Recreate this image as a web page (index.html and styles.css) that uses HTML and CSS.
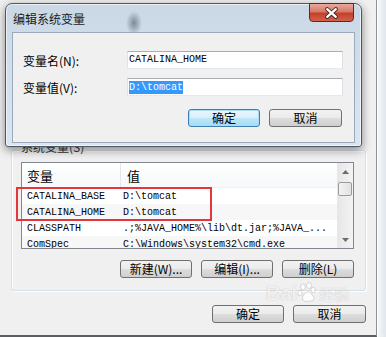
FILE: index.html
```html
<!DOCTYPE html>
<html lang="zh-CN">
<head>
    <meta charset="UTF-8">
    <title>编辑系统变量</title>
    <link rel="stylesheet" href="styles.css">
</head>
<body>
    <div class="screen">
        <div class="back-window">
            <div class="group">
                <div class="group-label">系统变量(S)</div>
                <div class="list">
                    <div class="list-main">
                        <div class="list-head">
                            <span class="head-name">变量</span>
                            <span class="head-value">值</span>
                        </div>
                        <div class="row"><span class="col-name">CATALINA_BASE</span><span class="col-value">D:\tomcat</span></div>
                        <div class="row alt"><span class="col-name">CATALINA_HOME</span><span class="col-value">D:\tomcat</span></div>
                        <div class="row"><span class="col-name">CLASSPATH</span><span class="col-value">.;%JAVA_HOME%\lib\dt.jar;%JAVA_...</span></div>
                        <div class="row alt"><span class="col-name">ComSpec</span><span class="col-value">C:\Windows\system32\cmd.exe</span></div>
                    </div>
                    <div class="scrollbar">
                        <div class="scroll-arrow">
                            <svg width="7" height="4" viewBox="0 0 7 4"><path d="M0 4 L3.5 0 L7 4 Z" fill="#6d6d6d"/></svg>
                        </div>
                        <div class="scroll-thumb"></div>
                        <div class="scroll-track"></div>
                        <div class="scroll-arrow">
                            <svg width="7" height="4" viewBox="0 0 7 4"><path d="M0 0 L3.5 4 L7 0 Z" fill="#6d6d6d"/></svg>
                        </div>
                    </div>
                </div>
                <div class="btn-row group-buttons">
                    <button class="btn">新建(W)...</button>
                    <button class="btn">编辑(I)...</button>
                    <button class="btn">删除(L)</button>
                </div>
            </div>
            <div class="btn-row footer-buttons">
                <button class="btn">确定</button>
                <button class="btn wide">取消</button>
            </div>
        </div>
        <div class="side-strip"></div>

        <!-- 前景对话框 -->
        <div class="dialog">
            <div class="titlebar">
                <span class="title">编辑系统变量</span>
                <button class="close-btn">
                    <svg width="45" height="19" viewBox="0 0 45 19">
                        <path d="M18 5 L27 13 M27 5 L18 13" stroke="#4a2a26" stroke-width="4.4" stroke-linecap="round"/>
                        <path d="M18 5 L27 13 M27 5 L18 13" stroke="#fff" stroke-width="2.4" stroke-linecap="round"/>
                    </svg>
                </button>
            </div>
            <div class="client">
                <div class="field-row">
                    <span class="field-label">变量名(N):</span>
                    <div class="textbox">CATALINA_HOME</div>
                </div>
                <div class="field-row">
                    <span class="field-label">变量值(V):</span>
                    <div class="textbox"><span class="selected">D:\tomcat</span></div>
                </div>
                <div class="btn-row dialog-buttons">
                    <button class="btn default">确定</button>
                    <button class="btn wide">取消</button>
                </div>
            </div>
        </div>

        <div class="highlight-box"></div>

        <div class="watermark">
            <span class="wm-bai">Bai</span>
            <svg class="wm-paw" width="22" height="22" viewBox="0 0 22 22">
                <g fill="rgba(255,255,255,0.85)" stroke="rgba(150,150,150,0.45)" stroke-width="0.8">
                    <ellipse cx="6" cy="5" rx="2.4" ry="3"/>
                    <ellipse cx="12" cy="3.5" rx="2.4" ry="3"/>
                    <ellipse cx="3" cy="11" rx="2.2" ry="2.8"/>
                    <ellipse cx="16" cy="8" rx="2.2" ry="2.8"/>
                    <path d="M10 10 C6 12 4 17 7 19 C9 20 12 19 14 19 C17 19 18 16 16 14 C14 12 13 9 10 10 Z"/>
                </g>
            </svg>
            <span class="wm-jy">经验</span>
        </div>
    </div>
</body>
</html>
```

FILE: styles.css
```css
body, html {
    margin: 0;
    padding: 0;
    font-family: "Noto Sans CJK SC", "Liberation Sans", sans-serif;
    font-size: 12px;
    color: #000;
}
.screen {
    position: relative;
    width: 386px;
    height: 337px;
    overflow: hidden;
    display: flex;
    background: #e9edf1;
}
.back-window {
    width: 377px;
    height: 337px;
    box-sizing: border-box;
    background: #f0f0f0;
    border-right: 1px solid #8e9093;
    border-bottom: 2px solid #5a5d61;
    padding: 150px 10px 0 11px;
    display: flex;
    flex-direction: column;
    align-items: flex-end;
}
.side-strip {
    flex-grow: 1;
    background: linear-gradient(to right, #f6f7f8, #dfe5eb);
    border-left: 1px solid #ffffff;
}
.group {
    position: relative;
    width: 355px;
    height: 141px;
    box-sizing: border-box;
    border: 1px solid #d5dfe5;
    border-radius: 3px;
    box-shadow: inset 1px 1px 0 #fff, 1px 1px 0 #fff;
    padding: 11px 11px 0 9px;
    display: flex;
    flex-direction: column;
    align-items: flex-end;
}
.group-label {
    position: absolute;
    left: 7px;
    top: -12px;
    padding: 0 2px;
    background: #f0f0f0;
    line-height: 16px;
    color: #333;
}
.list {
    width: 333px;
    height: 87px;
    box-sizing: border-box;
    border: 1px solid #828790;
    background: #fff;
    display: flex;
    overflow: hidden;
}
.list-main {
    flex-grow: 1;
    overflow: hidden;
}
.list-head {
    display: flex;
    height: 25px;
    align-items: center;
    background: linear-gradient(#ffffff, #f7f8fa);
    border-bottom: 1px solid #eef0f3;
    box-sizing: border-box;
    font-size: 13px;
}
.head-name {
    width: 99px;
    box-sizing: border-box;
    padding-left: 5px;
    line-height: 25px;
    border-right: 1px solid #e3e6ea;
}
.head-value {
    padding-left: 6px;
}
.row {
    display: flex;
    height: 16px;
    align-items: center;
    font-family: "Liberation Mono", monospace;
    font-size: 10px;
    white-space: nowrap;
}
.row.alt {
    background: #f7f7f7;
}
.col-name {
    width: 101px;
    flex-shrink: 0;
    box-sizing: border-box;
    padding-left: 5px;
}
.scrollbar {
    width: 16px;
    flex-shrink: 0;
    display: flex;
    flex-direction: column;
    align-items: center;
    background: linear-gradient(to right, #e6e6e6, #f3f3f3);
}
.scroll-arrow {
    height: 17px;
    width: 16px;
    display: flex;
    align-items: center;
    justify-content: center;
}
.scroll-thumb {
    width: 14px;
    height: 14px;
    margin-top: 2px;
    box-sizing: border-box;
    border: 1px solid #9b9b9b;
    border-radius: 2px;
    background: linear-gradient(to right, #f3f3f3, #e2e2e2);
}
.scroll-track {
    flex-grow: 1;
}
.btn-row {
    display: flex;
    gap: 9px;
}
.group-buttons {
    margin-top: 11px;
}
.footer-buttons {
    margin-top: 14px;
}
.btn {
    width: 72px;
    height: 18px;
    box-sizing: border-box;
    padding: 0;
    border: 1px solid #707070;
    border-radius: 3px;
    background: linear-gradient(#f2f2f2 0%, #ebebeb 48%, #dddddd 52%, #cfcfcf 100%);
    font-family: "Noto Sans CJK SC", sans-serif;
    font-size: 12px;
    line-height: 16px;
    color: #000;
    display: flex;
    align-items: center;
    justify-content: center;
}
.btn.wide {
    width: 73px;
}
.btn.default {
    border-color: #3c7fb1;
    box-shadow: inset 0 0 0 1px #a8dcf6;
    background: linear-gradient(#eaf6fd 0%, #d9f0fc 48%, #bee6fd 52%, #a7d9f5 100%);
}
/* 前景对话框 */
.dialog {
    position: absolute;
    left: 5px;
    top: 3px;
    width: 357px;
    height: 144px;
    box-sizing: border-box;
    border: 1px solid #4b5866;
    border-radius: 7px 7px 3px 3px;
    background:
        radial-gradient(ellipse 8px 12px at 128px 19px, rgba(60, 70, 85, 0.55), transparent),
        linear-gradient(#cad8e6, #dbe5ef);
    box-shadow: 0 3px 10px rgba(0, 0, 0, 0.45), inset 0 0 0 1px rgba(255, 255, 255, 0.6);
    padding: 0 6px 3px;
    display: flex;
    flex-direction: column;
}
.titlebar {
    position: relative;
    height: 28px;
    display: flex;
    align-items: center;
    padding-left: 1px;
}
.title {
    font-size: 12px;
    color: #1a1a1a;
}
.close-btn {
    position: absolute;
    right: 1px;
    top: -1px;
    width: 45px;
    height: 19px;
    padding: 0;
    border: 1px solid #5a2a24;
    border-radius: 0 0 4px 4px;
    background: linear-gradient(#e9a99c 0%, #d9786a 45%, #c4402c 55%, #d2614c 100%);
    display: flex;
}
.client {
    flex-grow: 1;
    background: #f0f0f0;
    border: 1px solid #9aaaba;
    padding: 18px 11px 0 10px;
    display: flex;
    flex-direction: column;
    gap: 9px;
}
.field-row {
    display: flex;
    align-items: center;
    height: 18px;
}
.field-label {
    width: 104px;
    flex-shrink: 0;
    font-size: 12px;
}
.textbox {
    flex-grow: 1;
    height: 18px;
    box-sizing: border-box;
    border: 1px solid;
    border-color: #abadb3 #dbdfe6 #e3e9ef #e2e3ea;
    background: #fff;
    padding-left: 1px;
    font-family: "Liberation Mono", monospace;
    font-size: 10px;
    line-height: 16px;
    display: flex;
    align-items: center;
}
.selected {
    background: #3399ff;
    color: #fff;
    line-height: 13px;
}
.dialog-buttons {
    justify-content: flex-end;
    margin-top: 4px;
    margin-right: 1px;
}
.highlight-box {
    position: absolute;
    left: 16px;
    top: 187px;
    width: 196px;
    height: 34px;
    box-sizing: border-box;
    border: 2px solid #e5363c;
}
.watermark {
    position: absolute;
    left: 266px;
    top: 282px;
    display: flex;
    align-items: flex-end;
    pointer-events: none;
}
.wm-bai {
    font-family: "Liberation Sans", sans-serif;
    font-weight: bold;
    font-size: 20px;
    line-height: 22px;
    color: rgba(255, 255, 255, 0.8);
    text-shadow: 0 0 1px rgba(120, 120, 120, 0.5);
}
.wm-jy {
    font-size: 15px;
    line-height: 20px;
    color: rgba(255, 255, 255, 0.8);
    text-shadow: 0 0 1px rgba(120, 120, 120, 0.5);
}
```
